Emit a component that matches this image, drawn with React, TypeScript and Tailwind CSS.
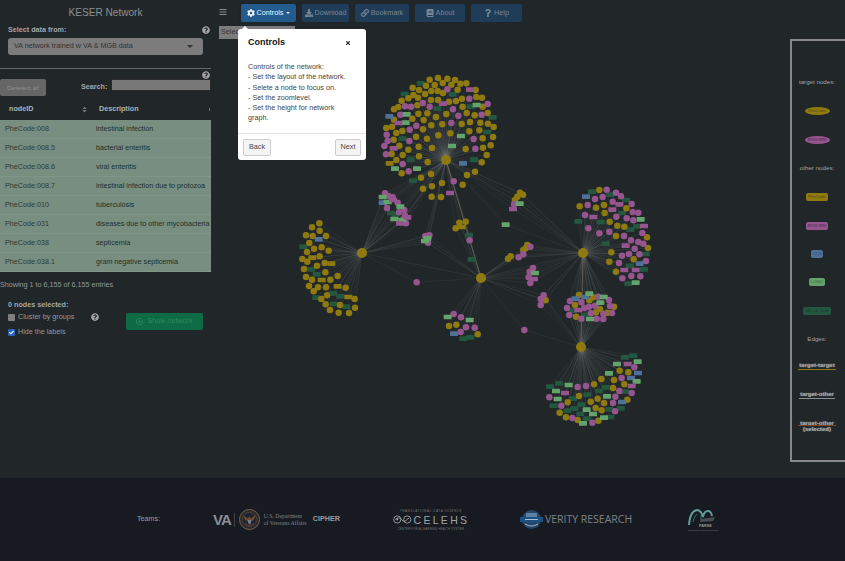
import { FaBars, FaBook, FaCheck, FaCog, FaDownload, FaLink, FaQuestion, FaQuestionCircle, FaRegDotCircle, FaSort, FaTimes } from "react-icons/fa";
import { ReactNode } from "react";

type Pt = [number, number];
type Kind = "y" | "p" | "dg" | "lg" | "pr" | "b" | "yr";
type Group = {
  origin: Pt;
  hubs: Pt[];
  nodes: Partial<Record<Kind, Pt[]>>;
};

const H1: Pt = [446, 160];
const H2: Pt = [362, 253];
const H3: Pt = [481, 278];
const H4: Pt = [583, 253];
const H5: Pt = [581, 347];

const Z4: Pt = [370, 65];
const Z9: Pt = [290, 180];
const Z10: Pt = [490, 180];

const colors: Record<Kind, string> = {
  y: "#8f7a10",
  yr: "#8f7a10",
  p: "#96558f",
  pr: "#96558f",
  dg: "#24573f",
  lg: "#64a36c",
  b: "#4f7199",
};

// coordinates were read off the zoomed crops, so each group keeps its crop origin
const groups: Group[] = [
  {
    origin: Z4,
    hubs: [H1],
    nodes: {
      y: [[179,44],[204,39],[232,41],[255,45],[271,56],[289,55],[168,62],[194,60],[218,54],[244,59],[128,68],[147,75],[184,78],[203,78],[219,84],[263,74],[317,75],[130,90],[165,87],[144,98],[115,100],[95,107],[183,105],[204,105],[237,110],[258,108],[276,101],[319,96],[336,98],[85,126],[72,133],[142,121],[278,125],[338,125],[145,146],[172,145],[229,147],[290,144],[314,151],[353,144],[127,161],[161,165],[198,156],[72,164],[300,171],[331,173],[354,176],[371,186],[49,189],[66,185],[97,198],[79,204],[184,181],[217,178],[275,177],[159,193],[328,196],[298,199],[138,215],[171,221],[205,211],[241,205],[338,220],[369,216],[71,224],[88,242],[146,245],[186,249],[287,252],[339,248],[362,241],[115,254],[65,267],[98,270],[147,274],[350,270],[79,285],[173,291],[335,292],[315,320],[291,330],[95,325],[183,327],[153,338],[216,354],[278,359],[159,371],[186,364],[185,395],[213,396]],
      p: [[232,73],[298,101],[159,114],[105,124],[123,125],[179,125],[249,133],[353,117],[91,149],[335,149],[265,152],[244,174],[139,182],[119,194],[50,209],[53,228],[43,243],[118,228],[311,222],[316,251],[48,268],[98,297],[116,319],[251,349]],
      dg: [[152,55],[104,87],[248,88],[202,131],[302,125],[368,157],[98,221],[352,201],[122,284],[312,284],[129,347]],
      lg: [[110,148],[107,173],[320,120],[273,213],[246,243],[75,311],[141,311]],
      pr: [[300,74],[219,116],[85,174],[71,250],[240,384]],
      b: [[58,154],[279,295]],
      yr: [[59,295]],
    },
  },
  {
    origin: Z9,
    hubs: [H2],
    nodes: {
      y: [[88,130],[66,142],[89,152],[48,166],[68,168],[108,168],[58,189],[72,206],[95,202],[116,212],[51,216],[37,237],[52,245],[89,229],[104,249],[42,267],[81,257],[106,277],[48,291],[66,299],[121,299],[143,288],[57,318],[84,322],[108,322],[167,323],[71,334],[111,346],[94,357],[194,357],[107,373],[150,375],[195,383],[120,390],[146,398],[177,399]],
      b: [[86,178]],
      dg: [[40,200],[64,268],[80,283],[130,340],[79,353],[151,349],[131,372],[169,380]],
      yr: [[67,233],[124,251],[95,300],[143,319],[175,351]],
    },
  },
  {
    origin: Z9,
    hubs: [H2, H1],
    nodes: {
      p: [[285,40],[296,48],[308,52],[323,68],[291,84],[327,97],[343,90],[345,107],[340,118],[348,130]],
      pr: [[330,130],[352,112],[309,60]],
      dg: [[303,99],[316,103]],
      lg: [[278,51],[293,66],[331,80],[313,117],[337,120]],
      b: [[278,68]],
    },
  },
  {
    origin: Z9,
    hubs: [H1, H2, H3],
    nodes: {
      p: [[406,168],[418,166],[414,188]],
      lg: [[412,175],[405,183]],
    },
  },
  { origin: Z9, hubs: [H2, H3], nodes: { p: [[380,307]] } },
  {
    origin: Z9,
    hubs: [H1, H3],
    nodes: {
      y: [[508,128],[527,125],[497,145]],
      yr: [[515,141]],
      dg: [[537,165],[545,238]],
      p: [[539,181]],
    },
  },
  {
    origin: Z9,
    hubs: [H3],
    nodes: {
      p: [[491,402],[513,412],[528,442],[554,443],[512,456]],
      y: [[477,438],[499,434],[563,463]],
      lg: [[473,411],[539,420]],
      b: [[492,461]],
      dg: [[520,476],[541,472]],
    },
  },
  {
    origin: Z10,
    hubs: [H1, H4],
    nodes: {
      y: [[90,38],[99,44],[82,50],[75,60]],
      p: [[72,72]],
      pr: [[69,87]],
      lg: [[89,71],[47,134]],
    },
  },
  {
    origin: Z10,
    hubs: [H3, H4],
    nodes: {
      y: [[112,195],[100,210],[107,205],[62,229],[54,236]],
      p: [[121,200],[100,223],[86,232],[129,264],[119,275],[116,292],[121,309]],
      lg: [[135,279]],
      pr: [[132,297]],
    },
  },
  {
    origin: Z10,
    hubs: [H3, H4, H5],
    nodes: {
      p: [[161,346],[152,357],[152,375]],
      y: [[167,361]],
    },
  },
  { origin: Z10, hubs: [H3, H5], nodes: { p: [[103,450]] } },
  {
    origin: Z10,
    hubs: [H4],
    nodes: {
      y: [[328,30],[269,79],[318,83],[342,75],[344,99],[409,85],[359,125],[382,137],[403,140],[378,168],[471,172],[474,204],[364,217],[431,238],[358,245],[378,275]],
      p: [[350,29],[378,38],[393,49],[315,57],[338,51],[293,75],[368,65],[425,72],[428,96],[445,98],[285,105],[379,110],[410,115],[430,121],[295,145],[328,160],[358,155],[402,168],[457,159],[423,181],[445,186],[460,191],[434,206],[396,227],[417,222],[448,223],[387,249],[468,243],[424,288],[451,289],[397,295]],
      dg: [[306,35],[361,44],[408,60],[396,99],[265,124],[332,126],[441,139],[421,149],[347,191],[467,222],[420,257],[462,268],[415,311]],
      lg: [[452,118],[437,308]],
      pr: [[388,73],[367,89],[310,111],[462,138],[407,197],[403,270],[437,270]],
      b: [[288,50],[449,251]],
    },
  },
  {
    origin: Z10,
    hubs: [H4, H5],
    nodes: {
      y: [[267,345],[298,361],[255,375],[310,352],[258,410],[372,380],[330,387],[318,397],[352,398]],
      p: [[240,363],[274,367],[231,384],[315,377],[325,350],[357,360],[360,378],[283,384],[297,380],[238,405],[274,416],[303,400],[340,401],[366,399],[320,416],[340,417]],
      lg: [[298,341],[341,351],[331,368],[300,417]],
      b: [[257,356],[286,351]],
      pr: [[265,390]],
      dg: [[248,392],[285,405]],
    },
  },
  {
    origin: Z10,
    hubs: [H5],
    nodes: {
      lg: [[381,552],[443,545],[357,580],[440,604],[236,615],[198,633],[203,657],[351,649],[290,689],[309,702],[342,713],[279,730]],
      dg: [[405,532],[430,527],[207,610],[180,620],[327,633],[347,622],[292,644],[405,635],[249,656],[274,674],[191,677],[232,692],[253,686],[358,688],[392,685],[271,702],[291,716],[361,711]],
      pr: [[413,552],[425,618],[225,639]],
      b: [[444,579],[423,594],[396,666]],
      p: [[433,562],[388,633],[425,639],[288,618],[263,621],[395,594],[178,652],[376,650],[369,669],[214,677],[375,694],[247,714],[307,728]],
      y: [[389,572],[415,577],[334,597],[372,600],[403,613],[312,613],[369,624],[267,648],[323,656],[302,665],[342,669],[412,659],[233,667],[317,684],[335,691],[209,698],[228,712],[263,720],[325,722]],
    },
  },
];

const kinds: Kind[] = ["dg", "y", "p", "b", "lg", "pr", "yr"];

function NetworkGraph() {
  const edges: { a: Pt; b: Pt }[] = [];
  const marks: { kind: Kind; x: number; y: number }[] = [];
  for (const g of groups) {
    for (const kind of kinds) {
      for (const [zx, zy] of g.nodes[kind] ?? []) {
        const x = g.origin[0] + zx / 3;
        const y = g.origin[1] + zy / 3;
        marks.push({ kind, x, y });
        for (const hub of g.hubs) edges.push({ a: hub, b: [x, y] });
      }
    }
  }
  return (
    <svg className="h-[439px] w-[579px] shrink-0" viewBox="211 39 579 439">
      {edges.map((e, i) => (
        <line key={i} x1={e.a[0]} y1={e.a[1]} x2={e.b[0]} y2={e.b[1]} stroke="#fff" strokeOpacity={0.09} strokeWidth={0.5} />
      ))}
      <line x1={H1[0]} y1={H1[1]} x2={H3[0]} y2={H3[1]} stroke="#77705a" strokeWidth={0.7} />
      <line x1={H4[0]} y1={H4[1]} x2={H5[0]} y2={H5[1]} stroke="#77705a" strokeWidth={0.7} />
      <line x1={H2[0]} y1={H2[1]} x2={H3[0]} y2={H3[1]} stroke="#fff" strokeOpacity={0.12} strokeWidth={0.5} />
      <line x1={H3[0]} y1={H3[1]} x2={H4[0]} y2={H4[1]} stroke="#fff" strokeOpacity={0.12} strokeWidth={0.5} />
      {marks.map((m, i) =>
        m.kind === "y" || m.kind === "p" ? (
          <circle key={i} cx={m.x} cy={m.y} r={3.25} fill={colors[m.kind]} />
        ) : (
          <rect key={i} x={m.x - 4} y={m.y - 2.3} width={8} height={4.6} rx={0.6} fill={colors[m.kind]} />
        ),
      )}
      {[H1, H2, H3, H4, H5].map((h, i) => (
        <circle key={i} cx={h[0]} cy={h[1]} r={5} fill="#8f7a10" />
      ))}
    </svg>
  );
}

const rows = [
  ["PheCode:008", "intestinal infection"],
  ["PheCode:008.5", "bacterial enteritis"],
  ["PheCode:008.6", "viral enteritis"],
  ["PheCode:008.7", "intestinal infection due to protozoa"],
  ["PheCode:010", "tuberculosis"],
  ["PheCode:031", "diseases due to other mycobacteria"],
  ["PheCode:038", "septicemia"],
  ["PheCode:038.1", "gram negative septicemia"],
];

function Sidebar() {
  return (
    <aside className="flex w-[211px] shrink-0 flex-col bg-[#212729] text-[7.2px] text-[#94989a]">
      <h1 className="flex h-[25px] items-center justify-center text-[10.1px] font-normal text-[#8b9093]">KESER Network</h1>
      <div className="flex h-[10px] items-center justify-between pr-[1px] pl-2">
        <span className="font-bold text-[#a3a6a8]">Select data from:</span>
        <FaQuestionCircle className="size-2 text-[#a3a3a3]" />
      </div>
      <div className="mt-[3px] ml-2 flex h-[17px] w-[195px] items-center justify-between rounded-[3px] bg-[#7c7c7c] pr-[10px] pl-[6px] text-[#333]">
        <span>VA network trained w VA &amp; MGB data</span>
        <span className="border-x-[3px] border-t-[3px] border-x-transparent border-t-[#333]" />
      </div>
      <div className="mt-[13px] h-px bg-[#666]" />
      <div className="flex h-[8px] items-center justify-end pt-[3px] pr-[1px]">
        <FaQuestionCircle className="size-2 text-[#a3a3a3]" />
      </div>
      <div className="mt-[2px] flex h-[17px] items-center">
        <button className="h-[17px] w-[46px] rounded-[2px] bg-[#666] text-[6.2px] text-[#8f8f8f]">Deselect all</button>
        <span className="-mt-[1px] ml-[35px] font-bold text-[#a3a6a8]">Search:</span>
        <span className="-mt-[5px] ml-[4px] h-[12px] flex-1 border border-[#2a2a2a] bg-[#787878]" />
      </div>
      <div className="mt-[3px] flex h-[21px] items-center font-bold text-[#a8b4b9]">
        <span className="ml-[9px] w-[72px]">nodeID</span>
        <FaSort className="size-[7px] text-[#6f7679]" />
        <span className="ml-[11px] flex-1">Description</span>
        <span className="mr-[1px] h-[3px] w-px bg-[#6f7679]" />
      </div>
      <div className="bg-[#778e80] text-[#252f2a]">
        {rows.map(([id, desc]) => (
          <div key={id} className="flex h-[19px] items-center border-b border-[#7f9688] pt-[1px] whitespace-nowrap">
            <span className="w-[96px] shrink-0 pl-[5px] text-[#303b35]">{id}</span>
            <span>{desc}</span>
          </div>
        ))}
      </div>
      <p className="mt-[8px] h-[10px] leading-[10px]">Showing 1 to 6,155 of 6,155 entries</p>
      <div className="mt-[10px] flex">
        <div className="flex w-[126px] flex-col pl-2">
          <span className="leading-[10px] font-bold text-[#a3a6a8]">0 nodes selected:</span>
          <div className="mt-[1px] flex h-[12px] items-center">
            <span className="size-[7px] rounded-[1px] bg-[#808080]" />
            <span className="ml-[3px]">Cluster by groups</span>
            <FaQuestionCircle className="ml-[17px] size-2 text-[#a3a3a3]" />
          </div>
          <div className="mt-[3px] flex h-[12px] items-center">
            <span className="flex size-[7px] items-center justify-center rounded-[1px] bg-[#2b62b8] text-white">
              <FaCheck className="size-[5px]" />
            </span>
            <span className="ml-[3px]">Hide the labels</span>
          </div>
        </div>
        <button className="mt-[13px] flex h-[17px] w-[77px] items-center justify-center gap-1 rounded-[2px] bg-[#0e6b45] text-[#2e8a5f]">
          <FaRegDotCircle className="size-[7px]" />
          Show network
        </button>
      </div>
    </aside>
  );
}

function ToolButton({ icon, label, className }: { icon: ReactNode; label: string; className: string }) {
  return (
    <button className={`flex h-[18px] items-center justify-center gap-[2px] rounded-[2px] bg-[#1f3d58] text-[7.2px] text-[#758694] ${className}`}>
      {icon}
      {label}
    </button>
  );
}

function Toolbar() {
  return (
    <div className="flex h-[26px] items-start pt-1">
      <FaBars className="mt-1 ml-2 size-2 text-[#8a8f92]" />
      <button className="ml-[14px] flex h-[18px] w-[55px] items-center justify-center gap-[2px] rounded-[2px] bg-[#235b8e] text-[7.2px] text-[#f0f3f6] shadow-[0_0_0_2px_#1d2529]">
        <FaCog className="size-2" />
        Controls
        <span className="ml-[1px] border-x-[2.5px] border-t-[2.5px] border-x-transparent border-t-[#e4e9ee]" />
      </button>
      <ToolButton className="ml-[6px] w-[47px]" icon={<FaDownload className="size-2" />} label="Download" />
      <ToolButton className="ml-[6px] w-[54px]" icon={<FaLink className="size-2" />} label="Bookmark" />
      <ToolButton className="ml-[6px] w-[50px]" icon={<FaBook className="size-2" />} label="About" />
      <ToolButton className="ml-[6px] w-[51px]" icon={<FaQuestion className="size-2" />} label="Help" />
    </div>
  );
}

function LegendPill({ label, bg, text, round }: { label: string; bg: string; text: string; round?: boolean }) {
  return (
    <span
      className={`flex h-[8px] items-center justify-center px-[1px] text-[4.2px] whitespace-nowrap ${bg} ${text} ${round ? "w-[25px] rounded-[50%]" : "rounded-[2px] px-[2px]"}`}
    >
      {label}
    </span>
  );
}

function Legend() {
  const heading = "text-[6.2px] leading-[8px] text-[#a0a4a6]";
  const edgeLabel = "text-center text-[6px] leading-[6px] font-bold text-[#9a9a9a] [text-shadow:0_0_1px_#bbb]";
  return (
    <div className="mb-4 flex w-[55px] shrink-0 flex-col items-center border-y-2 border-l-2 border-[#888] pt-[37px] pr-[3px]">
      <span className={heading}>target nodes:</span>
      <div className="mt-[21px]"><LegendPill round label="PheCode" bg="bg-[#8f7a10]" text="text-[#57490a]" /></div>
      <div className="mt-[21px]"><LegendPill round label="RXNORM" bg="bg-[#96558f]" text="text-[#4f2b4b]" /></div>
      <span className={`mt-[20px] ${heading}`}>other nodes:</span>
      <div className="mt-[21px]"><LegendPill label="PheCode" bg="bg-[#8f7a10]" text="text-[#57490a]" /></div>
      <div className="mt-[21px]"><LegendPill label="RXNORM" bg="bg-[#96558f]" text="text-[#4f2b4b]" /></div>
      <div className="mt-[20px]"><LegendPill label="CCS" bg="bg-[#4f7199]" text="text-[#2e4562]" /></div>
      <div className="mt-[20px]"><LegendPill label="LOINC" bg="bg-[#64a36c]" text="text-[#35613a]" /></div>
      <div className="mt-[21px]"><LegendPill label="VA Lab Code" bg="bg-[#24573f]" text="text-[#1a3b2c]" /></div>
      <span className={`mt-[20px] ${heading}`}>Edges:</span>
      <div className={`mt-[19px] w-[38px] border-b border-[#8f7a10] pb-[1px] ${edgeLabel}`}>target-target</div>
      <div className={`mt-[21px] w-[36px] border-b border-[#8d9092] pb-[1px] ${edgeLabel}`}>target-other</div>
      <div className={`mt-[21px] ${edgeLabel}`}>target-other<br />(selected)</div>
      <div className="-mt-[7px] h-px w-[38px] bg-[#7a4427]" />
    </div>
  );
}

function Popover() {
  return (
    <div className="absolute top-[29px] left-[27px] flex h-[131px] w-[128px] flex-col rounded-[3px] bg-white text-[#444]">
      <span className="absolute -top-[3px] left-[4px] border-x-[3px] border-b-[3px] border-x-transparent border-b-white" />
      <div className="flex h-[28px] items-center justify-between pr-[15px] pl-[10px]">
        <span className="text-[9px] font-bold text-[#111]">Controls</span>
        <FaTimes className="size-[6px] text-[#222]" />
      </div>
      <div className="flex-1 pt-[5px] pr-[13px] pl-[10px] text-[7.2px] leading-[10.3px] text-[#444]">
        Controls of the network:
        <br />- Set the layout of the network.
        <br />- Selete a node to focus on.
        <br />- Set the zoomlevel.
        <br />- Set the height for network graph.
      </div>
      <div className="flex h-[27px] items-center justify-between border-t border-[#e5e5e5] px-[5px]">
        <button className="h-[17px] w-[28px] rounded-[2px] border border-[#ccc] bg-[#f4f4f4] text-[7.2px] text-[#444]">Back</button>
        <button className="h-[17px] w-[26px] rounded-[2px] border border-[#ccc] bg-[#f4f4f4] text-[7.2px] text-[#444]">Next</button>
      </div>
    </div>
  );
}

function VaSeal() {
  return (
    <svg width="21" height="21" viewBox="0 0 21 21">
      <circle cx="10.5" cy="10.5" r="10" fill="#2b2a2c" stroke="#77624a" />
      <circle cx="10.5" cy="10.5" r="7" fill="#1d2330" stroke="#5e5245" strokeWidth="0.6" />
      <path d="M4.5 6.5 L9 9.5 L10.5 7.5 L12 9.5 L16.5 5.5 L15 11 L12 12.5 L10.5 15.5 L9 12.5 L6 11 Z" fill="#6e4a2f" />
      <path d="M9 11 h3 v3 l-1.5 1.2 L9 14 Z" fill="#6d7d94" />
      <path d="M6 14.5 Q10.5 18 15 14.5" fill="none" stroke="#8c3f3c" strokeWidth="0.8" />
    </svg>
  );
}

function CelehsMark() {
  return (
    <svg width="19" height="9" viewBox="0 0 20 9" fill="none" stroke="#a5a8aa" strokeWidth="0.9">
      <circle cx="4.5" cy="4.5" r="3.8" />
      <circle cx="15" cy="4.5" r="3.8" />
      <path d="M2.5 4.5 Q6 1 9 4.5 T14 5 L17 3" />
      <circle cx="4.5" cy="4.5" r="1" fill="#a5a8aa" stroke="none" />
    </svg>
  );
}

function VerityBadge() {
  return (
    <svg width="23" height="21" viewBox="0 0 23 21">
      <circle cx="11.5" cy="10.5" r="9.5" fill="#24476b" />
      <path d="M6 4 h11 v4 H6 Z" fill="#5f7f9e" />
      <rect x="0" y="8" width="23" height="5" fill="#1d4f80" />
      <rect x="5" y="10" width="13" height="1" fill="#a5bed4" />
      <path d="M5 15 Q11.5 19 18 15" fill="none" stroke="#9fb3c6" strokeWidth="1" />
    </svg>
  );
}

function ParseLogo() {
  return (
    <svg width="31" height="23" viewBox="0 0 31 23" fill="none">
      <path d="M2 17 Q3 3 10 2 Q14 2 16 9 Q17 3 21 3 Q24 3 25 8" stroke="#5d9c9a" strokeWidth="2" />
      <path d="M6 14 Q7 8 10 6 M14 12 L14 7" stroke="#4d8482" strokeWidth="0.8" />
      <path d="M14 11 L28 9 L26 13 L13 14 Z" fill="#4a4f56" />
      <text x="12" y="18.5" fontSize="3.8" fontWeight="700" fill="#94989c" fontFamily="Liberation Sans, sans-serif">PARSE</text>
      <text x="1" y="22.5" fontSize="2" fill="#74787c" fontFamily="Liberation Sans, sans-serif">Translational Research Partnership</text>
    </svg>
  );
}

function Footer() {
  return (
    <footer className="flex h-[83px] shrink-0 items-center bg-[#171b21] pl-[137px] text-[#8f9296]">
      <span className="w-[76px] text-[7.2px] text-[#9a9da1]">Teams:</span>
      <span className="text-[15px] leading-none font-bold tracking-[-1px] text-[#8c8f93]">VA</span>
      <span className="ml-[3px] h-[14px] w-px bg-[#3c4046]" />
      <span className="ml-[4px]"><VaSeal /></span>
      <span className="ml-[4px] w-[42px] font-['Liberation_Serif',serif] text-[5.7px] leading-[6.5px] whitespace-nowrap text-[#7f8387]">
        U.S. Department
        <br />
        of Veterans Affairs
      </span>
      <span className="ml-[7px] text-[7.2px] font-bold text-[#999ca0]">CIPHER</span>
      <div className="ml-[53px] flex w-[76px] flex-col items-center">
        <span className="text-[3px] leading-[4px] tracking-[0.6px] whitespace-nowrap text-[#74787c]">TRANSLATIONAL DATA SCIENCE</span>
        <div className="flex items-center gap-[2px]">
          <CelehsMark />
          <span className="text-[10.5px] leading-[14px] tracking-[2.3px] text-[#a0a3a6]">CELEHS</span>
        </div>
        <span className="text-[2.8px] leading-[4px] tracking-[0.2px] whitespace-nowrap text-[#74787c]">CENTER FOR A LEARNING HEALTH SYSTEM</span>
      </div>
      <div className="ml-[51px]"><VerityBadge /></div>
      <span className="ml-[2px] font-['Open_Sans',sans-serif] text-[10.5px] whitespace-nowrap text-[#7e8286]">VERITY RESEARCH</span>
      <div className="ml-[55px]"><ParseLogo /></div>
    </footer>
  );
}

export default function App() {
  return (
    <div className="flex h-[561px] w-[845px] flex-col overflow-hidden bg-[#212729] font-['Liberation_Sans',Arial,sans-serif] opacity-[0.995]">
      <div className="flex min-h-0 flex-1">
        <Sidebar />
        <main className="relative flex min-w-0 flex-1 flex-col">
          <Toolbar />
          <div className="ml-2 h-[13px] w-[76px] bg-[#7c7c7c] pl-[2px] text-[7.2px] leading-[12px] text-[#333]">Select</div>
          <div className="flex min-h-0 flex-1">
            <NetworkGraph />
            <Legend />
          </div>
          <Popover />
        </main>
      </div>
      <Footer />
    </div>
  );
}
